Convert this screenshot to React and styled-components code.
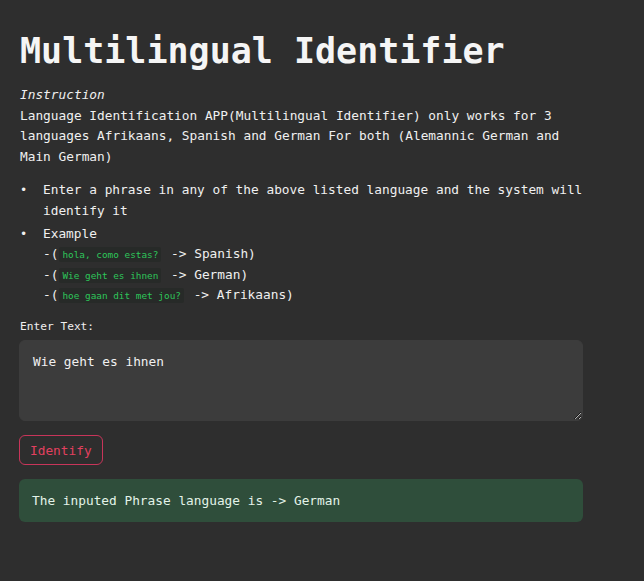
import React, { useState } from "react";
import styled, { createGlobalStyle } from "styled-components";

const Global = createGlobalStyle`
  html, body { margin: 0; padding: 0; background: #2e2e2e; }
  body {
    font-family: "DejaVu Sans Mono", "Liberation Mono", monospace;
    color: #f0f0f0;
    font-size: 12.8px;
    line-height: 1.6;
  }
  #root { min-height: 581px; }
`;

const Page = styled.main`
  width: 564px;
  padding: 30px 0 40px 19px;
  display: flex;
  flex-direction: column;
`;

const Title = styled.h1`
  margin: 0 0 13px 1px;
  font-size: 35px;
  line-height: 42px;
  font-weight: 700;
  color: #f5f5f5;
  letter-spacing: 0;
`;

const Para = styled.p`
  margin: 0 0 13px 1px;
  font-size: 12.8px;
  line-height: 20.5px;
  color: #f0f0f0;
`;

const List = styled.ul`
  margin: 0 0 11px 0;
  padding: 0;
  list-style: none;
  font-size: 12.8px;
  line-height: 20.5px;
`;

const Item = styled.li`
  display: grid;
  grid-template-columns: 24px 1fr;
  margin-bottom: 2.5px;
  &::before {
    content: "•";
    padding-left: 1px;
    font-size: 12px;
  }
`;

const Code = styled.code`
  font-family: "DejaVu Sans Mono", monospace;
  font-size: 9.4px;
  line-height: 10px;
  color: #2ec55a;
  background: #272a28;
  padding: 2px 3px;
  border-radius: 2px;
  margin: 0 2px 0 1px;
`;

const Label = styled.label`
  display: block;
  font-size: 11.2px;
  line-height: 16px;
  margin: 0 0 5px 1px;
  color: #f0f0f0;
`;

const TextArea = styled.textarea`
  box-sizing: border-box;
  width: 564px;
  height: 81px;
  background: #3c3c3c;
  border: 1px solid #3c3c3c;
  border-radius: 6px;
  color: #f0f0f0;
  font-family: "DejaVu Sans Mono", monospace;
  font-size: 12.8px;
  line-height: 20px;
  padding: 11px 13px;
  resize: vertical;
  outline: none;
  margin: 0;
  display: block;
`;

const Button = styled.button`
  align-self: flex-start;
  margin-top: 14px;
  height: 30px;
  padding: 0 10px;
  background: transparent;
  border: 1px solid #c8355a;
  border-radius: 6px;
  color: #e2405f;
  font-family: "DejaVu Sans Mono", monospace;
  font-size: 12.8px;
  cursor: pointer;
`;

const Result = styled.div`
  margin-top: 14px;
  box-sizing: border-box;
  width: 564px;
  background: #2f4e3b;
  border-radius: 6px;
  padding: 12px 13px;
  font-size: 12.8px;
  line-height: 19px;
  color: #e3f3e8;
`;

export default function App() {
  const [text, setText] = useState("Wie geht es ihnen");
  return (
    <>
      <Global />
      <Page>
        <Title>Multilingual Identifier</Title>
        <Para>
          <em>Instruction</em>
          <br />
          Language Identification APP(Multilingual Identifier) only works for 3
          languages Afrikaans, Spanish and German For both (Alemannic German and
          Main German)
        </Para>
        <List>
          <Item>
            <span>Enter a phrase in any of the above listed language and the system will identify it</span>
          </Item>
          <Item>
            <span>
              Example
              <br />-(<Code>hola, como estas?</Code> -&gt; Spanish)
              <br />-(<Code>Wie geht es ihnen</Code> -&gt; German)
              <br />-(<Code>hoe gaan dit met jou?</Code> -&gt; Afrikaans)
            </span>
          </Item>
        </List>
        <Label htmlFor="txt">Enter Text:</Label>
        <TextArea id="txt" value={text} onChange={(e) => setText(e.target.value)} />
        <Button>Identify</Button>
        <Result>The inputed Phrase language is -&gt; German</Result>
      </Page>
    </>
  );
}
